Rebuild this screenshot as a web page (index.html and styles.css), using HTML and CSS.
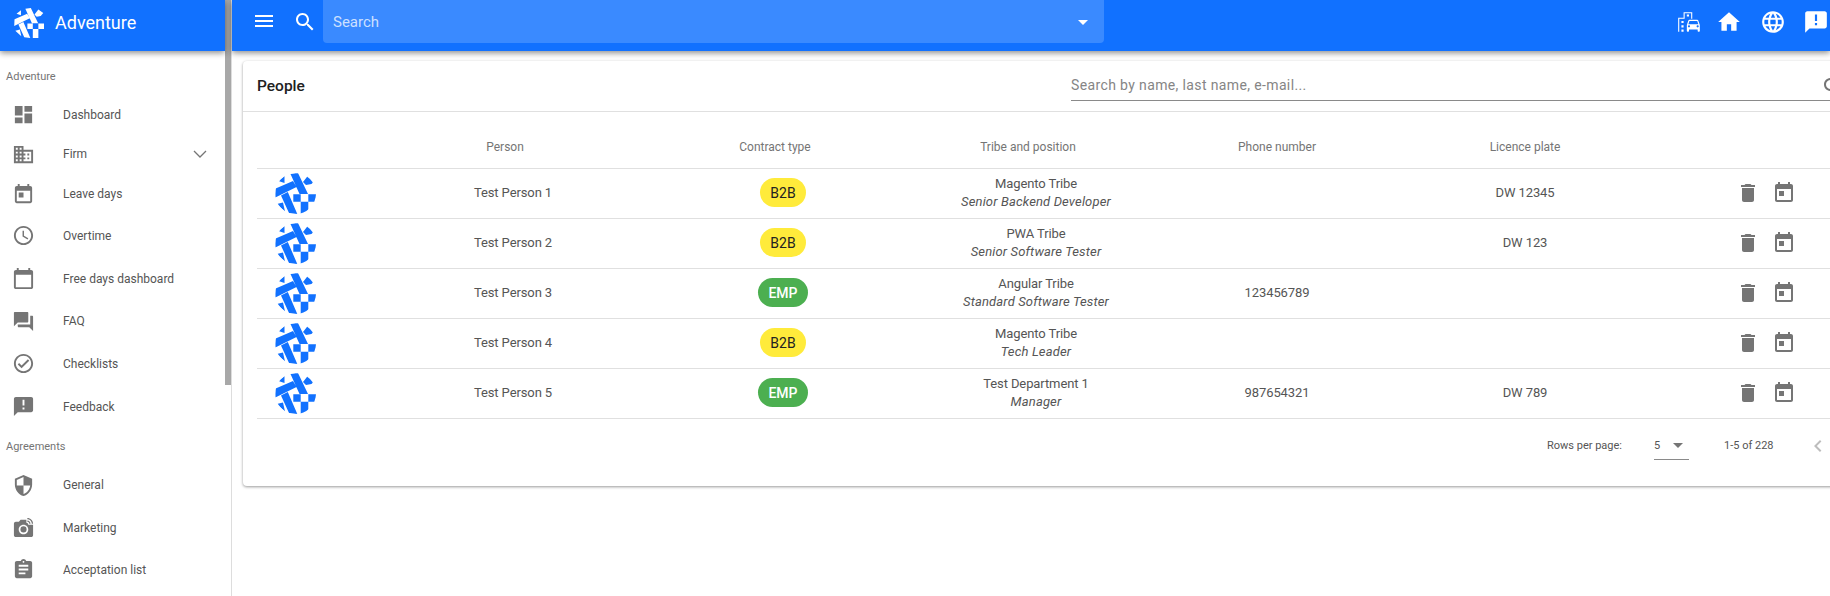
FILE: index.html
```html
<!DOCTYPE html>
<html lang="en">
<head>
<meta charset="utf-8">
<title>Adventure - People</title>
<link rel="stylesheet" href="styles.css">
</head>
<body>
<svg class="defs" width="0" height="0" aria-hidden="true">
  <defs>
    <symbol id="logo" viewBox="0 0 41 41">
      <path d="M15.5 1 23 0 33 21 24.5 21ZM.7 15.5 18 8 21.5 14 .3 24.5ZM3.5 8 9.5 3 9.5 10ZM28 9 33.3 2.2 40 7 36.5 11 31 12ZM6 22.5 12.8 19 22.3 41 14 40ZM1.8 31 8 29.5 10 38.5ZM18.3 21.3h7.4v7.4h-7.4ZM33.3 21.3H41v7.4h-7.7ZM25.7 28.7h7.6V41h-7.6Z"/>
    </symbol>
    <symbol id="i-today" viewBox="0 0 24 24"><path d="M19 3h-1V1h-2v2H8V1H6v2H5c-1.11 0-1.99.9-1.99 2L3 19c0 1.1.89 2 2 2h14c1.1 0 2-.9 2-2V5c0-1.1-.9-2-2-2zm0 16H5V8h14v11zM7 10h5v5H7z"/></symbol>
    <symbol id="i-delete" viewBox="0 0 24 24"><path d="M6 19c0 1.1.9 2 2 2h8c1.1 0 2-.9 2-2V7H6v12zM19 4h-3.5l-1-1h-5l-1 1H5v2h14V4z"/></symbol>
    <symbol id="i-feedback" viewBox="0 0 24 24"><path d="M20 2H4c-1.1 0-1.99.9-1.99 2L2 22l4-4h14c1.1 0 2-.9 2-2V4c0-1.1-.9-2-2-2zm-7 9h-2V5h2v6zm0 4h-2v-2h2v2z"/></symbol>
    <symbol id="i-search" viewBox="0 0 24 24"><path d="M15.5 14h-.79l-.28-.27C15.41 12.59 16 11.11 16 9.5 16 5.91 13.09 3 9.5 3S3 5.91 3 9.5 5.91 16 9.5 16c1.61 0 3.09-.59 4.23-1.57l.27.28v.79l5 4.99L20.49 19l-4.99-5zm-6 0C7.01 14 5 11.99 5 9.5S7.01 5 9.5 5 14 7.01 14 9.5 11.99 14 9.5 14z"/></symbol>
  </defs>
</svg>
<div class="app">
  <aside class="sidebar">
    <div class="sidebar-body">
      <div class="brand">
        <svg class="brand-logo"><use href="#logo"/></svg>
        <span class="brand-name">Adventure</span>
      </div>
      <nav class="nav">
        <div class="nav-label">Adventure</div>
        <a class="nav-item compact"><svg class="nav-icon" viewBox="0 0 24 24"><path d="M3 13h8V3H3v10zm0 8h8v-6H3v6zm10 0h8V11h-8v10zm0-18v6h8V3h-8z"/></svg><span>Dashboard</span></a>
        <a class="nav-item compact"><svg class="nav-icon" viewBox="0 0 24 24"><path d="M12 7V3H2v18h20V7H12zM6 19H4v-2h2v2zm0-4H4v-2h2v2zm0-4H4V9h2v2zm0-4H4V5h2v2zm4 12H8v-2h2v2zm0-4H8v-2h2v2zm0-4H8V9h2v2zm0-4H8V5h2v2zm10 12h-8v-2h2v-2h-2v-2h2v-2h-2V9h8v10zm-2-8h-2v2h2v-2zm0 4h-2v2h2v-2z"/></svg><span>Firm</span><svg class="nav-chevron" viewBox="0 0 24 24"><path d="M6 9l6 6 6-6"/></svg></a>
        <a class="nav-item compact wide"><svg class="nav-icon" viewBox="0 0 24 24"><use href="#i-today"/></svg><span>Leave days</span></a>
        <a class="nav-item"><svg class="nav-icon" viewBox="0 0 24 24"><path d="M11.99 2C6.47 2 2 6.48 2 12s4.47 10 9.99 10C17.52 22 22 17.52 22 12S17.52 2 11.99 2zM12 20c-4.42 0-8-3.58-8-8s3.58-8 8-8 8 3.58 8 8-3.58 8-8 8zm.5-13H11v6l5.25 3.15.75-1.23-4.5-2.67z"/></svg><span>Overtime</span></a>
        <a class="nav-item"><svg class="nav-icon" viewBox="0 0 24 24"><path d="M20 3h-1V1h-2v2H7V1H5v2H4c-1.1 0-2 .9-2 2v16c0 1.1.9 2 2 2h16c1.1 0 2-.9 2-2V5c0-1.1-.9-2-2-2zm0 18H4V8h16v13z"/></svg><span>Free days dashboard</span></a>
        <a class="nav-item"><svg class="nav-icon" viewBox="0 0 24 24"><path d="M21 6h-2v9H6v2c0 .55.45 1 1 1h11l4 4V7c0-.55-.45-1-1-1zm-4 6V3c0-.55-.45-1-1-1H3c-.55 0-1 .45-1 1v14l4-4h10c.55 0 1-.45 1-1z"/></svg><span>FAQ</span></a>
        <a class="nav-item"><svg class="nav-icon" viewBox="0 0 24 24"><path d="M16.59 7.58L10 14.17l-2.59-2.58L6 13l4 4 8-8zM12 2C6.48 2 2 6.48 2 12s4.48 10 10 10 10-4.48 10-10S17.52 2 12 2zm0 18c-4.42 0-8-3.58-8-8s3.58-8 8-8 8 3.58 8 8-3.58 8-8 8z"/></svg><span>Checklists</span></a>
        <a class="nav-item"><svg class="nav-icon" viewBox="0 0 24 24"><use href="#i-feedback"/></svg><span>Feedback</span></a>
        <div class="nav-label second">Agreements</div>
        <a class="nav-item"><svg class="nav-icon" viewBox="0 0 24 24"><path d="M12 1L3 5v6c0 5.55 3.84 10.74 9 12 5.16-1.26 9-6.45 9-12V5l-9-4zm0 10.99h7c-.53 4.12-3.28 7.79-7 8.94V12H5V6.3l7-3.11v8.8z"/></svg><span>General</span></a>
        <a class="nav-item"><svg class="nav-icon" viewBox="0 0 24 24"><circle cx="12" cy="14" r="3.2"/><path d="M16 3.33c2.58 0 4.67 2.09 4.67 4.67H22c0-3.31-2.69-6-6-6v1.33M16 6c1.11 0 2 .89 2 2h1.33c0-1.84-1.49-3.33-3.33-3.33V6"/><path d="M17 9c0-1.11-.89-2-2-2V4H9L7.17 6H4c-1.1 0-2 .9-2 2v12c0 1.1.9 2 2 2h16c1.1 0 2-.9 2-2V9h-5zm-5 10c-2.76 0-5-2.24-5-5s2.24-5 5-5 5 2.24 5 5-2.24 5-5 5z"/></svg><span>Marketing</span></a>
        <a class="nav-item last"><svg class="nav-icon" viewBox="0 0 24 24"><path d="M19 3h-4.18C14.4 1.84 13.3 1 12 1c-1.3 0-2.4.84-2.82 2H5c-1.1 0-2 .9-2 2v14c0 1.1.9 2 2 2h14c1.1 0 2-.9 2-2V5c0-1.1-.9-2-2-2zm-7 0c.55 0 1 .45 1 1s-.45 1-1 1-1-.45-1-1 .45-1 1-1zm2 14H7v-2h7v2zm3-4H7v-2h10v2zm0-4H7V7h10v2z"/></svg><span>Acceptation list</span></a>
      </nav>
    </div>
    <div class="scroll-track"><div class="scroll-thumb"></div></div>
  </aside>

  <div class="main">
    <header class="topbar">
      <svg class="top-icon menu" viewBox="0 0 24 24"><path d="M3 18h18v-2H3v2zm0-5h18v-2H3v2zm0-7v2h18V6H3z"/></svg>
      <svg class="top-icon magnifier" viewBox="0 0 24 24"><use href="#i-search"/></svg>
      <div class="top-search"><span>Search</span><i class="top-caret"></i></div>
      <div class="top-actions">
        <svg class="top-icon building" viewBox="0 0 24 24"><path d="M20.57 10.66C20.43 10.26 20.05 10 19.6 10h-7.19c-.46 0-.83.26-.98.66L10 14.77l.01 5.51c0 .38.31.72.69.72h.62c.38 0 .68-.38.68-.76V19h8v1.24c0 .38.31.76.69.76h.61c.38 0 .69-.34.69-.72l.01-1.37v-4.14l-1.43-4.11zM12.41 11h7.19l1.03 3h-9.25l1.03-3zM12 17c-.55 0-1-.45-1-1s.45-1 1-1 1 .45 1 1-.45 1-1 1zm8 0c-.55 0-1-.45-1-1s.45-1 1-1 1 .45 1 1-.45 1-1 1z"/><path d="M14 9h1V3H7v5H2v13h1V9h5V4h6z"/><path d="M5 11h2v2H5zM10 5h2v2h-2zM5 15h2v2H5zM5 19h2v2H5z"/></svg>
        <svg class="top-icon" viewBox="0 0 24 24"><path d="M10 20v-6h4v6h5v-8h3L12 3 2 12h3v8z"/></svg>
        <svg class="top-icon" viewBox="0 0 24 24"><path d="M11.99 2C6.47 2 2 6.48 2 12s4.47 10 9.99 10C17.52 22 22 17.52 22 12S17.52 2 11.99 2zm6.93 6h-2.95c-.32-1.25-.78-2.45-1.38-3.56 1.84.63 3.37 1.91 4.33 3.56zM12 4.04c.83 1.2 1.48 2.53 1.91 3.96h-3.82c.43-1.43 1.08-2.76 1.91-3.96zM4.26 14C4.1 13.36 4 12.69 4 12s.1-1.36.26-2h3.38c-.08.66-.14 1.32-.14 2 0 .68.06 1.34.14 2H4.26zm.82 2h2.95c.32 1.25.78 2.45 1.38 3.56-1.84-.63-3.37-1.9-4.33-3.56zm2.95-8H5.08c.96-1.66 2.49-2.93 4.33-3.56C8.81 5.55 8.35 6.75 8.03 8zM12 19.96c-.83-1.2-1.48-2.53-1.91-3.96h3.82c-.43 1.43-1.08 2.76-1.91 3.96zM14.34 14H9.66c-.09-.66-.16-1.32-.16-2 0-.68.07-1.35.16-2h4.68c.09.65.16 1.32.16 2 0 .68-.07 1.34-.16 2zm.25 5.56c.6-1.11 1.06-2.31 1.38-3.56h2.95c-.96 1.65-2.49 2.93-4.33 3.56zM16.36 14c.08-.66.14-1.32.14-2 0-.68-.06-1.34-.14-2h3.38c.16.64.26 1.31.26 2s-.1 1.36-.26 2h-3.38z"/></svg>
        <svg class="top-icon" viewBox="0 0 24 24"><use href="#i-feedback"/></svg>
      </div>
    </header>

    <div class="content">
      <section class="card">
        <div class="card-head">
          <h1 class="card-title">People</h1>
          <div class="filter">
            <span class="filter-text">Search by name, last name, e-mail...</span>
            <svg class="filter-icon" viewBox="0 0 24 24"><use href="#i-search"/></svg>
          </div>
        </div>
        <div class="table">
          <div class="grid thead">
            <span></span>
            <span class="th-person">Person</span>
            <span>Contract type</span>
            <span>Tribe and position</span>
            <span>Phone number</span>
            <span>Licence plate</span>
            <span></span>
          </div>

          <div class="grid row">
            <svg class="avatar"><use href="#logo"/></svg>
            <span>Test Person 1</span>
            <span class="shifted"><b class="badge b2b">B2B</b></span>
            <span class="tribe shifted">Magento Tribe<em>Senior Backend Developer</em></span>
            <span></span>
            <span>DW 12345</span>
            <span class="actions"><svg viewBox="0 0 24 24"><use href="#i-delete"/></svg><svg viewBox="0 0 24 24"><use href="#i-today"/></svg></span>
          </div>
          <div class="grid row">
            <svg class="avatar"><use href="#logo"/></svg>
            <span>Test Person 2</span>
            <span class="shifted"><b class="badge b2b">B2B</b></span>
            <span class="tribe shifted">PWA Tribe<em>Senior Software Tester</em></span>
            <span></span>
            <span>DW 123</span>
            <span class="actions"><svg viewBox="0 0 24 24"><use href="#i-delete"/></svg><svg viewBox="0 0 24 24"><use href="#i-today"/></svg></span>
          </div>
          <div class="grid row">
            <svg class="avatar"><use href="#logo"/></svg>
            <span>Test Person 3</span>
            <span class="shifted"><b class="badge emp">EMP</b></span>
            <span class="tribe shifted">Angular Tribe<em>Standard Software Tester</em></span>
            <span>123456789</span>
            <span></span>
            <span class="actions"><svg viewBox="0 0 24 24"><use href="#i-delete"/></svg><svg viewBox="0 0 24 24"><use href="#i-today"/></svg></span>
          </div>
          <div class="grid row">
            <svg class="avatar"><use href="#logo"/></svg>
            <span>Test Person 4</span>
            <span class="shifted"><b class="badge b2b">B2B</b></span>
            <span class="tribe shifted">Magento Tribe<em>Tech Leader</em></span>
            <span></span>
            <span></span>
            <span class="actions"><svg viewBox="0 0 24 24"><use href="#i-delete"/></svg><svg viewBox="0 0 24 24"><use href="#i-today"/></svg></span>
          </div>
          <div class="grid row">
            <svg class="avatar"><use href="#logo"/></svg>
            <span>Test Person 5</span>
            <span class="shifted"><b class="badge emp">EMP</b></span>
            <span class="tribe shifted">Test Department 1<em>Manager</em></span>
            <span>987654321</span>
            <span>DW 789</span>
            <span class="actions"><svg viewBox="0 0 24 24"><use href="#i-delete"/></svg><svg viewBox="0 0 24 24"><use href="#i-today"/></svg></span>
          </div>
        </div>
        <div class="pager">
          <span class="pager-label">Rows per page:</span>
          <div class="pager-select"><span>5</span><i class="pager-caret"></i></div>
          <span class="pager-range">1-5 of 228</span>
          <svg class="pager-prev" viewBox="0 0 24 24"><path d="M15.41 7.41L14 6l-6 6 6 6 1.41-1.41L10.83 12z"/></svg>
        </div>
      </section>
    </div>
  </div>
</div>
</body>
</html>
```
FILE: styles.css
```css
* { box-sizing: border-box; }
html, body { margin: 0; height: 596px; overflow: hidden; background: #fff; }
body { font-family: Roboto, "Liberation Sans", sans-serif; color: #555; }
.defs { position: absolute; }

.app { display: grid; grid-template-columns: 232px 1fr; height: 596px; overflow: hidden; }

/* sidebar */
.sidebar { display: flex; border-right: 1px solid #ddd; height: 596px; overflow: hidden; }
.sidebar-body { width: 225px; flex: none; }
.scroll-track { width: 6px; flex: none; }
.scroll-thumb { height: 385px; background: #a8a8a8; }
.brand {
  height: 51px; background: #1171ff; display: flex; align-items: center; padding: 0 0 6px 14px;
  box-shadow: 0 2px 6px rgba(0,0,0,.45); position: relative;
}
.brand-logo { width: 30px; height: 30px; fill: #fff; }
.brand-name { color: #fff; font-size: 18px; margin-left: 11px; }
.nav { padding-top: 16px; }
.nav-label { font-size: 11px; color: #757575; padding-left: 6px; height: 20px; line-height: 20px; margin-bottom: 8px; }
.nav-label.second { margin-top: 9px; margin-bottom: 7px; }
.nav-item { display: flex; align-items: center; height: 42.7px; font-size: 12px; color: #555; position: relative; }
.nav-item.compact { height: 39.5px; }
.nav-item.compact.wide { height: 40.5px; }
.nav-item.last { margin-top: -1px; }
.nav-icon { width: 23px; height: 23px; margin-left: 12px; margin-right: 28px; fill: #757575; flex: none; }
.nav-chevron { position: absolute; left: 188px; width: 24px; height: 24px; fill: none; stroke: #757575; stroke-width: 1.3; }

/* top bar */
.main { min-width: 0; display: flex; flex-direction: column; }
.topbar {
  height: 51px; flex: none; background: #1171ff; display: flex; align-items: center;
  box-shadow: 0 2px 6px rgba(0,0,0,.45); position: relative; z-index: 2;
}
.top-icon { width: 26px; height: 26px; fill: #fff; flex: none; }
.menu { width: 24px; height: 24px; margin-left: 20px; margin-top: -9px; }
.magnifier { width: 24px; height: 24px; margin-left: 17px; margin-top: -8px; }
.top-search {
  width: 781px; height: 43px; margin-left: 6px; align-self: flex-start; background: #3a8aff;
  border-radius: 0 0 4px 4px; display: flex; align-items: center; justify-content: space-between;
  padding: 1px 16px 0 10px; color: rgba(255,255,255,.75); font-size: 15px;
}
.top-caret { width: 0; height: 0; border-left: 5px solid transparent; border-right: 5px solid transparent; border-top: 5px solid #fff; }
.top-actions { margin-left: auto; display: flex; gap: 17.5px; margin-right: 1px; margin-top: -7px; }
.building { margin-right: -3px; }

/* card */
.content { flex: 1; padding: 10px 0 0 11px; overflow: hidden; }
.card { width: 1640px; height: 425px; background: #fff; border-radius: 4px; box-shadow: 0 1px 3px rgba(0,0,0,.4); }
.card-head { height: 51px; border-bottom: 1px solid #e0e0e0; display: flex; align-items: center; padding-left: 14px; position: relative; }
.card-title { margin: 0; font-size: 15.5px; font-weight: 500; color: #212121; }
.filter { position: absolute; left: 828px; right: 0; top: 0; height: 40px; border-bottom: 1px solid #8a8a8a; display: flex; align-items: center; padding-top: 9px; font-size: 14px; letter-spacing: .37px; color: #858585; }
.filter-icon { position: absolute; left: 750px; top: 14px; width: 24px; height: 24px; fill: #757575; }

/* table */
.table { margin-left: 14px; width: 1612px; }
.grid { display: grid; grid-template-columns: 80px 352px 172px 334px 164px 332px 1fr; align-items: center; text-align: center; }
.thead { height: 57px; padding-top: 14px; font-size: 12px; font-weight: 400; color: #757575; border-bottom: 1px solid #e0e0e0; }
.th-person { padding-right: 16px; }
.row { height: 50px; padding-bottom: 2px; font-size: 13px; letter-spacing: -.1px; border-bottom: 1px solid #e0e0e0; color: #555; }
.shifted { padding-left: 16px; }
.avatar { width: 41px; height: 41px; margin: 2px 0 0 18px; fill: #1171ff; clip-path: circle(50%); }
.badge { display: inline-flex; align-items: center; justify-content: center; height: 29px; border-radius: 15px; font-size: 14px; font-weight: 400; letter-spacing: 0; }
.b2b { width: 46px; background: #ffeb3b; color: #222; }
.emp { width: 50px; background: #4caf50; color: #fff; font-weight: 500; }
.tribe { line-height: 18px; }
.tribe em { display: block; letter-spacing: .15px; }
.actions { display: flex; gap: 12px; padding: 1px 0 0 45px; }
.actions svg { width: 24px; height: 24px; fill: #757575; }

/* pager */
.pager { height: 68px; position: relative; display: flex; align-items: center; font-size: 11px; color: #555; padding-left: 1304px; padding-bottom: 15px; }
.pager-label { width: 107px; }
.pager-select { width: 35px; height: 29px; border-bottom: 1px solid #8a8a8a; display: flex; align-items: center; justify-content: space-between; padding-right: 6px; }
.pager-caret { width: 0; height: 0; border-left: 5px solid transparent; border-right: 5px solid transparent; border-top: 5px solid #757575; }
.pager-range { margin-left: 35px; }
.pager-prev { margin-left: 32px; width: 24px; height: 24px; fill: #bdbdbd; }
```
